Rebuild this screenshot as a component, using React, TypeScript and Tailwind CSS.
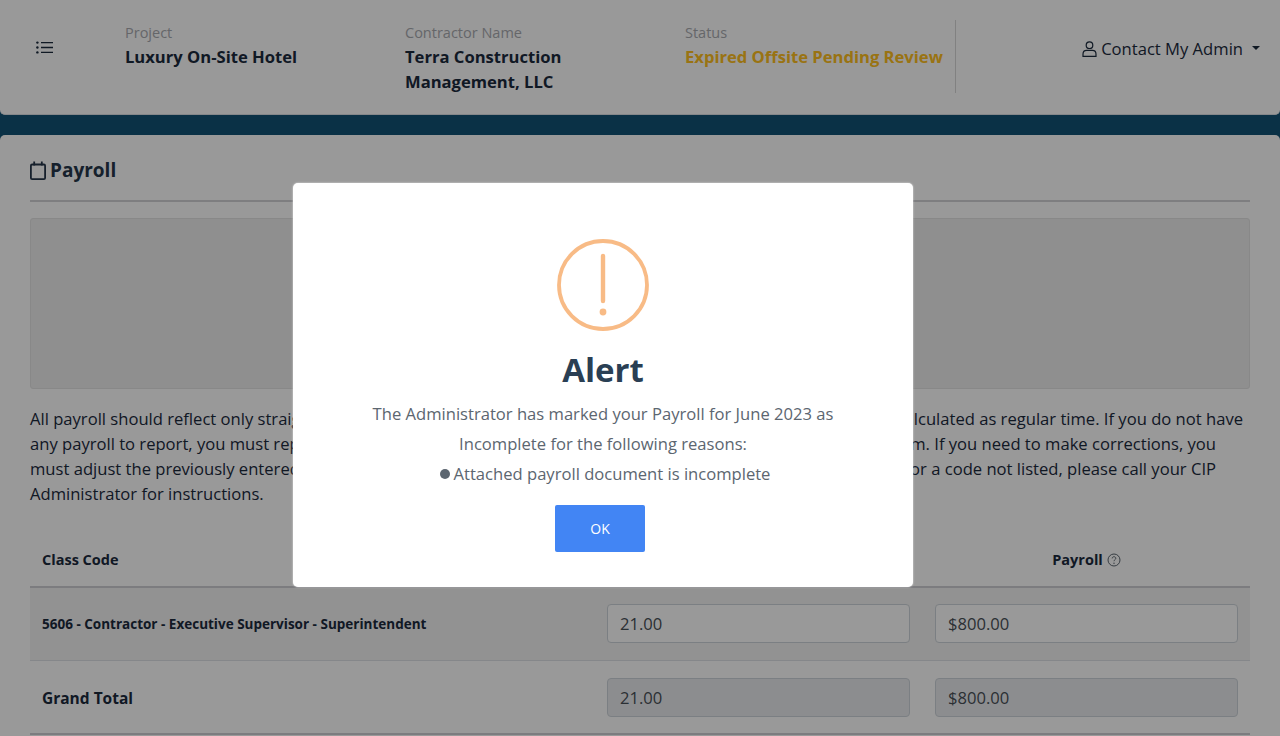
import React from "react";

const font = { fontFamily: '"Open Sans", sans-serif' };

// middle of each line sits behind the dialog
const paragraph = [
  { left: "All payroll should reflect only straight", right: "calculated as regular time. If you do not have", pad: "pr-[7px]" },
  { left: "any payroll to report, you must report", right: "form. If you need to make corrections, you", pad: "pr-[34px]" },
  { left: "must adjust the previously entered", right: "for a code not listed, please call your CIP", pad: "pr-[34px]" },
  { left: "Administrator for instructions.", right: "", pad: "" },
];

const ListIcon = () => (
  <svg width="17" height="13" viewBox="0 0 17 13" fill="none" className="text-[#1b2a3d]">
    <circle cx="1.4" cy="1.6" r="1.2" fill="currentColor" />
    <circle cx="1.4" cy="6.5" r="1.2" fill="currentColor" />
    <circle cx="1.4" cy="11.4" r="1.2" fill="currentColor" />
    <path d="M5 1.6h12M5 6.5h12M5 11.4h12" stroke="currentColor" strokeWidth="1.3" />
  </svg>
);

const CalendarIcon = () => (
  <svg width="16" height="19" viewBox="0 0 16 19" fill="none" className="text-[#26364a]">
    <rect x="0.9" y="3.5" width="14.2" height="14.6" rx="1.2" stroke="currentColor" strokeWidth="1.8" />
    <path d="M4.2 0.5v4M11.8 0.5v4" stroke="currentColor" strokeWidth="1.8" />
  </svg>
);

const UserIcon = () => (
  <svg width="15" height="16" viewBox="0 0 15 16" fill="none" className="text-[#1b2a3d]">
    <circle cx="7.5" cy="4.2" r="3.3" stroke="currentColor" strokeWidth="1.2" />
    <path d="M1 13.2c0-2.4 1.8-3.8 3.6-3.8h5.8c1.8 0 3.6 1.4 3.6 3.8v2.1H1z" stroke="currentColor" strokeWidth="1.2" />
  </svg>
);

const HelpIcon = () => (
  <svg width="14" height="14" viewBox="0 0 14 14" fill="none" className="text-[#5c6670]">
    <circle cx="7" cy="7" r="6" stroke="currentColor" strokeWidth="1" />
    <path d="M5.2 5.4c0-1 .8-1.7 1.8-1.7s1.8.7 1.8 1.6c0 1.4-1.8 1.4-1.8 2.9" stroke="currentColor" strokeWidth="1" />
    <circle cx="7" cy="10.2" r=".7" fill="currentColor" />
  </svg>
);

const AlertIcon = () => (
  <svg width="92" height="92" viewBox="0 0 92 92" fill="none">
    <circle cx="46" cy="46" r="44" stroke="#f8bb86" strokeWidth="3.8" />
    <path d="M46 17v45" stroke="#f8bb86" strokeWidth="4.4" strokeLinecap="round" />
    <circle cx="46" cy="73" r="3.4" fill="#f8bb86" />
  </svg>
);

const Field = ({ value, disabled }: { value: string; disabled?: boolean }) => (
  <div className={`w-[303px] h-[39px] flex items-center px-3 pt-[2px] rounded border border-[#ced4da] text-[16.6px] text-[#495057] ${disabled ? "bg-[#e9ecef]" : "bg-white"}`}>
    {value}
  </div>
);

export default function App() {
  return (
    <div className="relative h-[736px] w-[1280px] overflow-hidden bg-[#115375] text-[#1b2a3d]" style={font}>
      <header className="h-[115px] bg-white rounded-b-[5px] flex pt-[20px] border-b border-[#dee2e6]">
        <div className="w-[125px] pl-[36px] pt-[21px]">
          <ListIcon />
        </div>
        <div className="w-[280px]">
          <div className="text-[14.5px] leading-[25px] text-[#a9abb0]">Project</div>
          <div className="-mt-px text-[16.6px] leading-[25px] font-bold">Luxury On-Site Hotel</div>
        </div>
        <div className="w-[280px]">
          <div className="text-[14.5px] leading-[25px] text-[#a9abb0]">Contractor Name</div>
          <div className="-mt-px text-[16.6px] leading-[25px] font-bold w-[200px]">Terra Construction Management, LLC</div>
        </div>
        <div className="w-[271px] h-[73px] border-r border-[#d8d8d8]">
          <div className="text-[14.5px] leading-[25px] text-[#a9abb0]">Status</div>
          <div className="-mt-px text-[16.6px] leading-[25px] font-bold text-[#ffc020] whitespace-nowrap">Expired Offsite Pending Review</div>
        </div>
        <div className="flex-1 flex justify-end items-start pt-[16px] pr-[20px] gap-[9px]">
          <div className="flex items-center gap-1 text-[16.6px] leading-[25px]">
            <UserIcon />
            <span>Contact My Admin</span>
          </div>
          <div className="mt-[10px] w-0 h-0 border-x-[4.5px] border-x-transparent border-t-[4.5px] border-t-[#1b2a3d]" />
        </div>
      </header>

      <div className="mt-[20px] h-[601px] bg-white rounded-t-[5px] px-[30px]">
        <div className="h-[67px] flex items-center gap-1 pt-[5px] border-b-2 border-[#d3d3d6]">
          <CalendarIcon />
          <h2 className="text-[19px] font-bold text-[#26364a]">Payroll</h2>
        </div>
        <div className="mt-[16px] h-[171px] bg-[#eeeeee] border border-[#e3e3e3] rounded-[3px]" />
        <div className="mt-[17px] text-[16.6px] leading-[25px]">
          {paragraph.map((line) => (
            <div key={line.left} className={`flex justify-between whitespace-nowrap ${line.pad}`}>
              <span>{line.left}</span>
              <span>{line.right}</span>
            </div>
          ))}
        </div>

        <div className="mt-[18px] h-[64px] flex items-center pt-[10px] pl-[12px] border-b-2 border-[#cfcfd4] text-[14.5px] font-bold">
          <div className="w-[565px]">Class Code</div>
          <div className="w-[303px]" />
          <div className="ml-[25px] w-[303px] flex items-center justify-center gap-1">
            <span>Payroll</span>
            <HelpIcon />
          </div>
        </div>
        <div className="h-[73px] bg-[#f3f3f3] flex items-center pl-[12px] border-b border-[#dee2e6]">
          <div className="w-[565px] text-[13.5px] font-bold">5606 - Contractor - Executive Supervisor - Superintendent</div>
          <div className="flex gap-[25px] -mt-[2px]">
            <Field value="21.00" />
            <Field value="$800.00" />
          </div>
        </div>
        <div className="h-[74px] flex items-center pl-[12px] border-b-2 border-[#cfcfd4]">
          <div className="w-[565px] mt-[3px] text-[15.5px] font-bold">Grand Total</div>
          <div className="flex gap-[25px]">
            <Field value="21.00" disabled />
            <Field value="$800.00" disabled />
          </div>
        </div>
      </div>

      {/* modal backdrop and dialog */}
      <div className="absolute inset-0 bg-black/40" />
      <div className="absolute left-[293px] top-[183px] w-[620px] h-[404px] bg-white rounded-[5px] shadow-[0_0_2px_rgba(255,255,255,0.8)] flex flex-col items-center pt-[56px]">
        <AlertIcon />
        <h1 className="mt-[16px] text-[33px] leading-[46px] font-bold text-[#2a3f54]">Alert</h1>
        <div className="mt-[6px] text-[16.6px] leading-[30px] text-[#5c6670] text-center w-[500px]">
          <p>The Administrator has marked your Payroll for June 2023 as Incomplete for the following reasons:</p>
          <p className="ml-[4px] flex items-center justify-center gap-1">
            <span className="w-[10px] h-[10px] rounded-full bg-[#5c6670]" />
            Attached payroll document is incomplete
          </p>
        </div>
        <button className="mt-[16px] -ml-[6px] w-[90px] h-[47px] bg-[#4285f4] rounded-[2px] text-white text-[14px] font-medium">OK</button>
      </div>
    </div>
  );
}
